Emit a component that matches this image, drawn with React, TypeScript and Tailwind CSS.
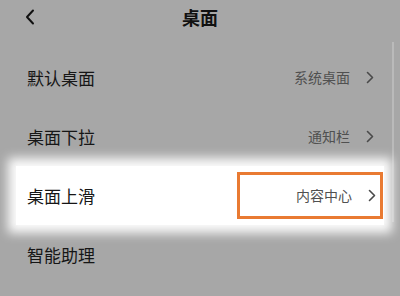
import React from 'react';

const FONT = { fontFamily: '"Noto Sans CJK SC", "Noto Sans", sans-serif' };

function Chevron({ className }: { className: string }) {
  return (
    <svg width="8" height="13" viewBox="0 0 8 13" fill="none" className={className}>
      <path d="M1.5 1.5 L6.5 6.5 L1.5 11.5" stroke="#4a4a4a" strokeWidth="1.6" strokeLinecap="round" strokeLinejoin="round" />
    </svg>
  );
}

function Row({ label, value, highlight }: { label: string; value?: string; highlight?: boolean }) {
  return (
    <div
      className={
        'relative flex h-[59px] items-center ' +
        (highlight ? 'mx-[16px] bg-white shadow-[0_0_10px_8px_rgba(255,255,255,0.95)]' : '')
      }
    >
      <span className={'text-[17px] text-[#161616] ' + (highlight ? 'pl-[11px]' : 'pl-[27px]')}>{label}</span>
      {value && (
        <div
          className={
            'ml-auto flex items-center ' +
            (highlight ? 'mr-[1px] h-[47px] w-[146px] justify-end border-[3.5px] border-[#e97a32]' : '')
          }
        >
          <span className="text-[14px] text-[#505050]">{value}</span>
          <Chevron className={highlight ? 'ml-[16px] mr-[4px]' : 'ml-[16px] mr-[26px]'} />
        </div>
      )}
    </div>
  );
}

export default function App() {
  return (
    <div className="relative h-[296px] w-[400px] overflow-hidden bg-[#a7a7a7]" style={FONT}>
      {/* scrollbar */}
      <div className="absolute right-[6px] top-[42px] h-[180px] w-[2px] bg-[#bababa]" />
      <div className="relative flex h-[35px] items-center justify-center">
        <svg width="10" height="16" viewBox="0 0 10 16" fill="none" className="absolute left-[25px] top-[9px]">
          <path d="M8 1.5 L2 8 L8 14.5" stroke="#111" strokeWidth="2" strokeLinecap="round" strokeLinejoin="round" />
        </svg>
        <span className="text-[18px] font-bold text-[#111]">桌面</span>
      </div>
      <div className="pt-[13px]">
        <Row label="默认桌面" value="系统桌面" />
        <Row label="桌面下拉" value="通知栏" />
        <Row label="桌面上滑" value="内容中心" highlight />
        <Row label="智能助理" />
      </div>
    </div>
  );
}
